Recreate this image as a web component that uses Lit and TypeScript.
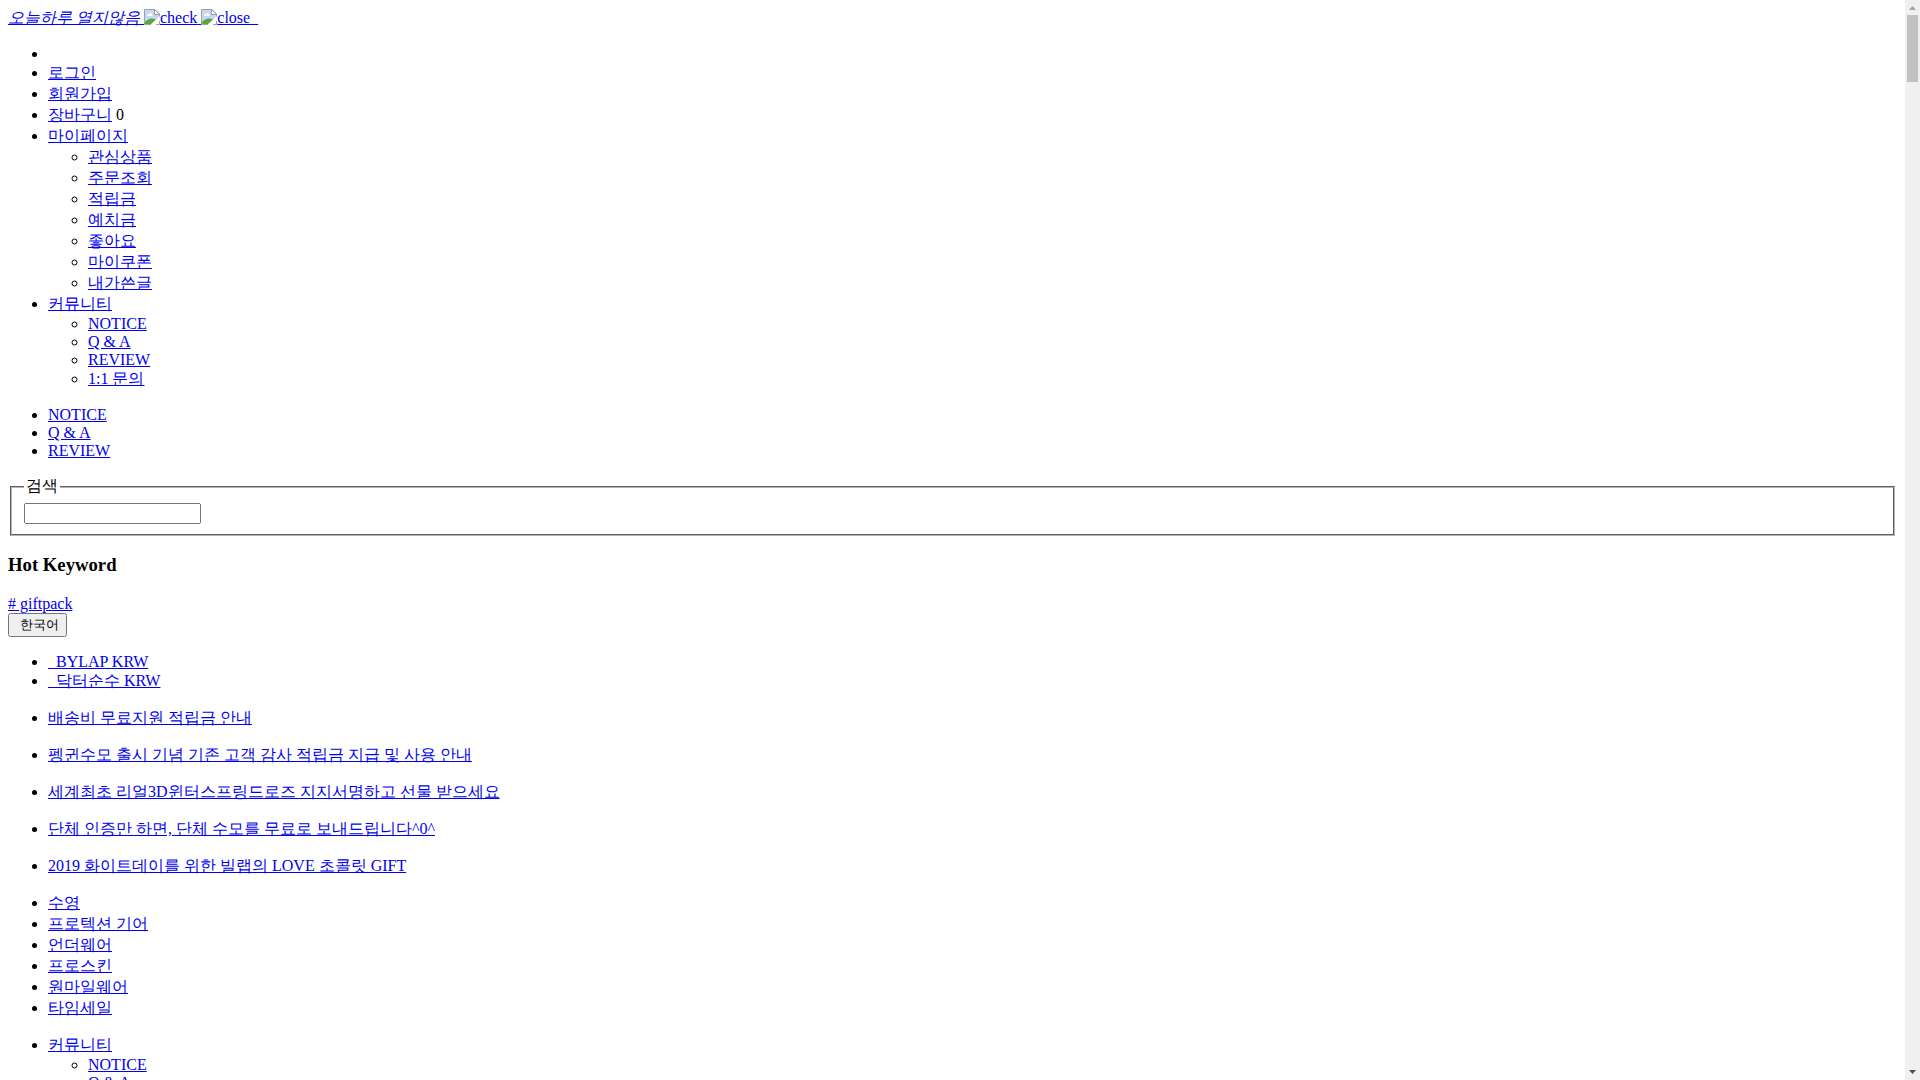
import { LitElement, html, css } from "lit";
import { customElement } from "lit/decorators.js";

type Entry = { label: string; count?: string; children?: Entry[] };

const named = (...labels: string[]): Entry[] => labels.map((label) => ({ label }));

const accountMenu: Entry[] = [
  { label: "" },
  { label: "로그인" },
  { label: "회원가입" },
  { label: "장바구니", count: "0" },
  { label: "마이페이지", children: named("관심상품", "주문조회", "적립금", "예치금", "좋아요", "마이쿠폰", "내가쓴글") },
  { label: "커뮤니티", children: named("NOTICE", "Q & A", "REVIEW", "1:1 문의") },
];
const boardMenu = named("NOTICE", "Q & A", "REVIEW");
const shopMenu = named("\u00a0 BYLAP KRW", "\u00a0 닥터순수 KRW");
const notices = [
  "배송비 무료지원 적립금 안내",
  "펭귄수모 출시 기념 기존 고객 감사 적립금 지급 및 사용 안내",
  "세계최초 리얼3D윈터스프링드로즈 지지서명하고 선물 받으세요",
  "단체 인증만 하면, 단체 수모를 무료로 보내드립니다^0^",
  "2019 화이트데이를 위한 빌랩의 LOVE 초콜릿 GIFT",
];
const categoryMenu = named("수영", "프로텍션 기어", "언더웨어", "프로스킨", "원마일웨어", "타임세일");
const communityMenu: Entry[] = [{ label: "커뮤니티", children: named("NOTICE", "Q & A") }];

const list = (entries: Entry[]): unknown => html`<ul>
  ${entries.map(
    (e) => html`<li>${e.label ? html`<a href="#">${e.label}</a>` : "\u00a0"}${e.count ? ` ${e.count}` : ""}${e.children ? list(e.children) : ""}</li>`
  )}
</ul>`;

const picture = html`<svg class="picture" viewBox="0 0 16 16" aria-hidden="true">
  <path d="M1 1H11L15 5V8L7 15H1Z" fill="#c3d7f7" />
  <path d="M3 7C3 5.500 4 5 5 5C5.500 3.500 8 3.500 8 5.500C9 5.500 9 7 8 7Z" fill="#fff" />
  <path d="M1 15V13C4 9.500 8 8.500 12 10.500L7 15Z" fill="#55a83b" />
  <path d="M7 16L16 7V11L11 16Z" fill="#fff" />
  <path d="M.5 15.500V.5H11L15.500 5V7.500M.5 15.500H7M12 15.500H15.500V12" fill="none" stroke="#a0a0a0" />
  <path d="M10.500 .5V5.500H15.500Z" fill="#fff" stroke="#a0a0a0" />
</svg>`;

@customElement("app-root")
export class AppRoot extends LitElement {
  static styles = css`
    :host {
      display: flex;
      height: 100vh;
      overflow: hidden;
      background: #fff;
      color: #000;
      font: 16px "Liberation Serif", serif;
    }
    .page { flex: 1; min-width: 0; padding: 8px; }
    a { color: #0000ee; text-decoration: underline; }
    ul { margin: 16px 0; padding-left: 40px; list-style: disc; }
    ul ul { margin: 0; list-style: circle; }
    fieldset { border: 2px groove #b4b4b4; }
    button, .query { font-family: "Liberation Sans", sans-serif; }
    .query { width: 177px; box-sizing: border-box; }
    .picture { float: left; width: 16px; height: 16px; }
    .alt { display: inline-block; text-decoration: underline; }
    .track { width: 15px; flex: none; display: flex; flex-direction: column; align-items: center; background: #f0f0f0; }
    .arrow { width: 15px; height: 15px; flex: none; }
    .thumb { width: 11px; height: 67px; background: #c1c1c1; }
    .space { flex: 1; }
  `;

  render() {
    return html`
      <main class="page">
        <div>
          <a href="#"><em>오늘하루 열지않음 </em><span class="alt">${picture}check</span> </a><a href="#"><span class="alt">${picture}close</span> &nbsp;</a>
        </div>
        ${list(accountMenu)} ${list(boardMenu)}
        <form>
          <fieldset>
            <legend>검색</legend>
            <input class="query" type="text" aria-label="검색" />
          </fieldset>
        </form>
        <h3>Hot Keyword</h3>
        <div><a href="#"># giftpack</a></div>
        <div><button type="button">&nbsp;한국어</button></div>
        ${list(shopMenu)}
        ${notices.map((n) => list(named(n)))}
        ${list(categoryMenu)} ${list(communityMenu)}
      </main>
      <div class="track" aria-hidden="true">
        <svg class="arrow" viewBox="0 0 15 15"><path d="M4 10H11L7.500 6Z" fill="#a3a3a3" /></svg>
        <div class="thumb"></div>
        <div class="space"></div>
        <svg class="arrow" viewBox="0 0 15 15"><path d="M4 5H11L7.500 9Z" fill="#505050" /></svg>
      </div>
    `;
  }
}
